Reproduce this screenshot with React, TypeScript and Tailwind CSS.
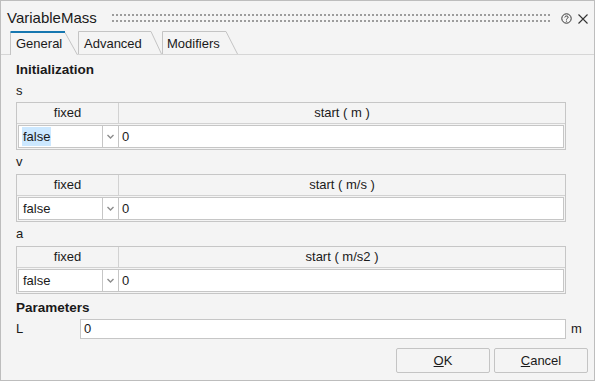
import React from 'react';

const font = { fontFamily: '"Liberation Sans", Arial, sans-serif' };

const sections = [
    { name: 's', unit: 'start ( m )' },
    { name: 'v', unit: 'start ( m/s )' },
    { name: 'a', unit: 'start ( m/s2 )' },
];

const Chevron: React.FC = () => (
    <svg width="7" height="5" viewBox="0 0 7 5" className="text-[#8c8c8c]">
        <path d="M0.5 1 L3.5 4 L6.5 1" stroke="currentColor" strokeWidth="1.4" fill="none" />
    </svg>
);

const VarTable: React.FC<{ unit: string; highlight?: boolean }> = ({ unit, highlight }) => (
    <div className="w-[550px] border border-[#c6c6c6] bg-[#f4f4f4]">
        <div className="flex h-[21px] border-b border-[#d2d2d2] text-[13px] text-[#1a1a1a]">
            <div className="w-[102px] flex items-center justify-center border-r border-[#d2d2d2]">fixed</div>
            <div className="flex-1 flex items-center justify-center">{unit}</div>
        </div>
        <div className="flex h-[25px] p-px text-[13px] text-[#1a1a1a]">
            <div className="w-[85px] bg-white border border-[#c6c6c6] flex items-center pl-[3px]">
                <span className={highlight ? 'bg-[#cce8ff] px-px' : 'px-px'}>false</span>
            </div>
            <div className="w-[16px] bg-white border border-l-0 border-[#c6c6c6] flex items-center justify-center">
                <Chevron />
            </div>
            <div className="flex-1 bg-white border border-l-0 border-[#c6c6c6] flex items-center pl-[3px]">0</div>
        </div>
    </div>
);

const App: React.FC = () => {
    return (
        <div className="w-[597px] h-[382px] bg-white" style={font}>
            <div className="w-[595px] h-[381px] border border-[#bdbdbd] bg-[#f4f4f4] flex flex-col">
                {/* title bar */}
                <div className="h-[30px] flex items-center pl-[6px] pr-[6px]">
                    <span className="text-[15px] text-[#1a1a1a] pt-[5px]">VariableMass</span>
                    <div className="flex-1 ml-[15px] mr-[10px] pt-[4px]">
                        <svg width="100%" height="8" className="block">
                            <defs>
                                <pattern id="grip" width="4" height="6" patternUnits="userSpaceOnUse">
                                    <rect x="0" y="0" width="2" height="2" fill="#9c9c9c" />
                                </pattern>
                            </defs>
                            <rect x="0" y="0" width="100%" height="8" fill="url(#grip)" />
                        </svg>
                    </div>
                    <div className="flex items-center gap-[6px] pt-[5px]">
                        <svg width="11" height="11" viewBox="0 0 11 11">
                            <circle cx="5.5" cy="5.5" r="4.7" stroke="#333" strokeWidth="1" fill="none" />
                            <path d="M3.8 4.4 C3.8 2.6 7.2 2.6 7.2 4.2 C7.2 5.3 5.5 5.3 5.5 6.6" stroke="#333" strokeWidth="1" fill="none" />
                            <circle cx="5.5" cy="8.1" r="0.6" fill="#333" />
                        </svg>
                        <svg width="10" height="10" viewBox="0 0 10 10">
                            <path d="M0.5 0.5 L9.5 9.5 M9.5 0.5 L0.5 9.5" stroke="#333" strokeWidth="1.1" />
                        </svg>
                    </div>
                </div>

                {/* tabs */}
                <div className="flex items-end h-[24px] pl-[9px] border-b border-[#d6d6d6] text-[13px] text-[#1a1a1a]">
                    <div className="relative h-[24px] w-[68px] -mb-px bg-[#f4f4f4] flex items-center pl-[6px]">
                        <svg className="absolute inset-0" width="68" height="24" viewBox="0 0 68 24">
                            <path d="M0.5 24 L0.5 1.5 L55 1.5 L67.5 24" stroke="#c4c4c4" fill="none" />
                            <path d="M0.5 1 L55 1" stroke="#1677b0" strokeWidth="2" />
                        </svg>
                        <span className="relative pt-[2px]">General</span>
                    </div>
                    <div className="relative h-[23px] w-[84px] flex items-center pl-[6px]">
                        <svg className="absolute inset-0" width="84" height="23" viewBox="0 0 84 23">
                            <path d="M0.5 23 L0.5 0.5 L73 0.5 L83.5 23" stroke="#c4c4c4" fill="none" />
                        </svg>
                        <span className="relative pt-[2px]">Advanced</span>
                    </div>
                    <div className="relative h-[23px] w-[76px] flex items-center pl-[5px]">
                        <svg className="absolute inset-0" width="76" height="23" viewBox="0 0 76 23">
                            <path d="M0.5 23 L0.5 0.5 L64 0.5 L75.5 23" stroke="#c4c4c4" fill="none" />
                        </svg>
                        <span className="relative pt-[2px]">Modifiers</span>
                    </div>
                </div>

                {/* content */}
                <div className="flex flex-col pl-[15px] text-[13px] text-[#1a1a1a]">
                    <div className="h-[25px] flex items-end font-bold text-[13.5px]">Initialization</div>
                    {sections.map((s, i) => (
                        <div key={s.name} className="flex flex-col">
                            <div className={(i === 0 ? 'h-[22px]' : 'h-[24px]') + ' flex items-center'}>{s.name}</div>
                            <VarTable unit={s.unit} highlight={i === 0} />
                        </div>
                    ))}
                    <div className="h-[25px] flex items-center font-bold text-[13.5px] pt-[3px]">Parameters</div>
                    <div className="flex items-center h-[20px]">
                        <span className="w-[64px]">L</span>
                        <div className="w-[486px] h-[20px] bg-white border border-[#c6c6c6] flex items-center pl-[3px]">0</div>
                        <span className="ml-[5px]">m</span>
                    </div>
                    <div className="flex justify-end gap-[4px] pr-[6px] mt-[9px]">
                        <button className="w-[94px] h-[25px] bg-[#f4f4f4] border border-[#c4c4c4] rounded-[2px] text-[13px] text-[#1a1a1a]">
                            <span className="underline">O</span>K
                        </button>
                        <button className="w-[94px] h-[25px] bg-[#f4f4f4] border border-[#c4c4c4] rounded-[2px] text-[13px] text-[#1a1a1a]">
                            <span className="underline">C</span>ancel
                        </button>
                    </div>
                </div>
            </div>
        </div>
    );
};

export default App;
